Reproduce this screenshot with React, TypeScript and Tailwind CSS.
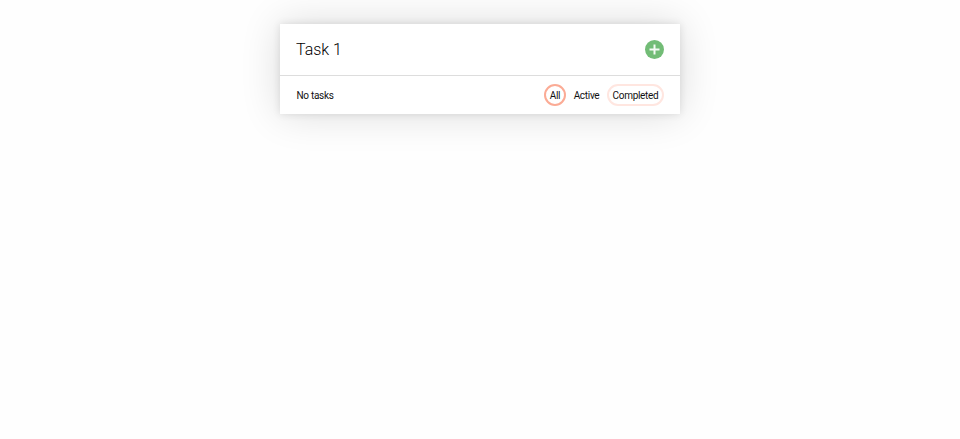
export default function App() {
  return (
    <main className="flex h-[439px] justify-center bg-[#fefefe] pt-6 font-['Roboto',sans-serif] font-light text-black">
      <section className="h-[90px] w-[400px] bg-white shadow-[0_0_8px_0_rgba(0,0,0,0.11),0_0_40px_0_rgba(0,0,0,0.14)]">
        <header className="flex h-[52px] items-center justify-between border-b border-[#dddddd] px-4">
          <h1 className="scale-y-[1.08] text-[16px]">Task 1</h1>
          <button aria-label="Add task" className="flex size-[19px] items-center justify-center rounded-full bg-[#72bc76]">
            <svg viewBox="0 0 19 19" className="size-[19px]" stroke="#f4faf4" strokeWidth="2"><path d="M9.5 4.5v10M4.5 9.5h10" /></svg>
          </button>
        </header>
        <footer className="flex h-[38px] items-center justify-between px-4 text-[10px] font-normal tracking-[-0.3px] text-[#111111]">
          <span className="ml-[0.5px]">No tasks</span>
          <nav className="flex items-center">
            <button className="h-[22px] w-[22px] rounded-full border-2 border-[#fbab95]">All</button>
            <button className="w-[41px]">Active</button>
            <button className="h-[22px] w-[57px] rounded-full border-2 border-[#ffe6e0]">Completed</button>
          </nav>
        </footer>
      </section>
    </main>
  );
}
